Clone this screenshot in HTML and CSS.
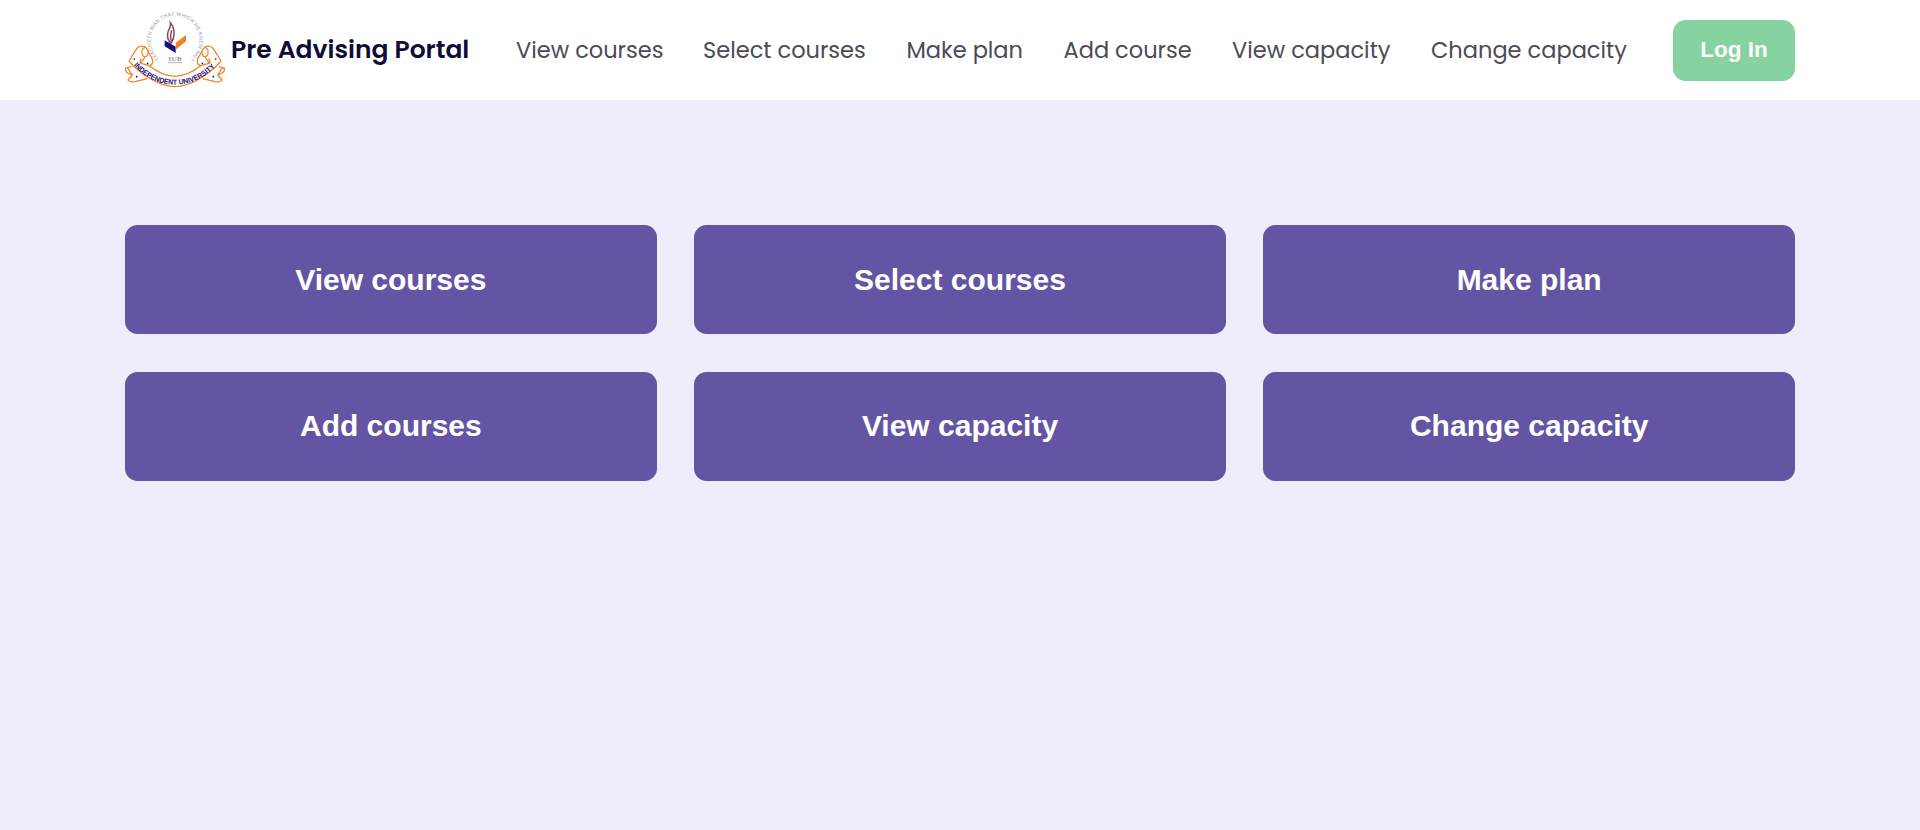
FILE: index.html
```html
<!DOCTYPE html>
<html lang="en">
<head>
<meta charset="utf-8">
<title>Pre Advising Portal</title>
<link rel="stylesheet" href="styles.css">
</head>
<body>
<header class="navbar">
  <a class="brand">
    <svg class="logo" viewBox="15 30 300 234" aria-label="Independent University">
      <defs>
        <path id="motto" d="M118 176A73 73 0 1 1 212 176"/>
        <path id="banner" d="M38 192Q92 254 165 254T292 192"/>
        <g id="scroll" fill="none" stroke="#ee8425" stroke-width="3.6" stroke-linejoin="round">
          <path d="M27 183L50 146Q58 136 70 139Q79 141 83 151L98 180Q100 194 88 197L78 194M27 183Q54 215 94 238Q130 260 165 260M88 197Q124 226 165 229"/>
          <path d="M83 151Q87 166 75 171Q64 168 66 151Q68 144 75 143M75 171L62 190Q58 184 64 176M62 190L78 194"/>
          <path d="M34 200L16 204Q14 213 25 220L37 225L24 240Q28 247 45 245L82 236M18 204Q25 203 29 214L37 225"/>
        </g>
      </defs>
      <text class="logo-motto"><textPath href="#motto" textLength="358" lengthAdjust="spacing">TEACHETH MAN THAT WHICH HE KNEW NOT</textPath></text>
      <path d="M153 132Q137 113 145 93Q153 78 151 68Q163 82 162 102Q162 116 155 127Q149 111 155 91" fill="none" stroke="#824b68" stroke-width="4.5"/>
      <path d="M134 121L167 140V159L134 139Z" fill="#1a0c7b"/>
      <path d="M167 128L198 105V124L167 149Z" fill="#ee8425"/>
      <text class="logo-initials" x="165" y="183" text-anchor="middle" textLength="40" lengthAdjust="spacingAndGlyphs">IUB</text>
      <path d="M143 188H186" stroke="#b5b5b5" stroke-width="3"/>
      <use href="#scroll"/>
      <use href="#scroll" transform="matrix(-1 0 0 1 330 0)"/>
      <g fill="#1a0c7b"><circle cx="43" cy="177" r="2.6"/><circle cx="83" cy="190" r="2.6"/><circle cx="50" cy="230" r="2.6"/><circle cx="287" cy="177" r="2.6"/><circle cx="247" cy="190" r="2.6"/><circle cx="280" cy="230" r="2.6"/></g>
      <text class="logo-banner"><textPath href="#banner" startOffset="5" textLength="276" lengthAdjust="spacingAndGlyphs">INDEPENDENT UNIVERSITY</textPath></text>
    </svg>
    <span class="brand-name">Pre Advising Portal</span>
  </a>
  <nav class="links">
    <a class="link view-courses">View courses</a>
    <a class="link select-courses">Select courses</a>
    <a class="link make-plan">Make plan</a>
    <a class="link add-course">Add course</a>
    <a class="link view-capacity">View capacity</a>
    <a class="link change-capacity">Change capacity</a>
  </nav>
  <button class="login">Log In</button>
</header>
<main class="cards">
  <button class="card">View courses</button>
  <button class="card">Select courses</button>
  <button class="card">Make plan</button>
  <button class="card lower">Add courses</button>
  <button class="card lower">View capacity</button>
  <button class="card lower">Change capacity</button>
</main>
</body>
</html>
```
FILE: styles.css
```css
* { box-sizing: border-box; }
body { margin: 0; min-height: 100vh; background: #efecfb; font-family: Poppins, Inter, sans-serif; }
.navbar { display: flex; align-items: center; height: 100px; padding: 0 125px; background: #fff; }
.brand { display: flex; align-items: center; width: 391px; flex: none; }
.logo { width: 100px; height: 78px; flex: none; margin-top: -2px; }
.logo-motto { font: 15.5px "Liberation Sans", sans-serif; fill: #999; }
.logo-initials { font: bold 17px "Liberation Serif", serif; fill: #999; }
.logo-banner { font: bold 22px "Liberation Sans", sans-serif; fill: #1a0c7b; }
.brand-name { margin-left: 6px; font-size: 25px; font-weight: 600; color: #0f0c35; white-space: nowrap; }
.links { display: flex; flex: 1; }
.link { flex: none; font-size: 22.5px; font-weight: 400; color: #4b4b57; white-space: nowrap; }
.view-courses { width: 187px; }
.select-courses { width: 203.5px; }
.make-plan { width: 157px; }
.add-course { width: 168.5px; }
.view-capacity { width: 199px; }
.login { width: 122px; height: 61px; padding: 0 0 1px; border: 0; border-radius: 12.5px; background: #86d3a1; color: #fff; font: bold 22.5px "Liberation Sans", Arial, sans-serif; }
.cards { display: grid; grid-template-columns: repeat(3, 1fr); grid-auto-rows: 109px; gap: 38px 37.5px; padding: 125px; }
.card { padding: 0; border: 0; border-radius: 12.5px; background: #6355a4; color: #fff; font: bold 30px "Liberation Sans", Arial, sans-serif; }
.lower { padding-bottom: 2px; }
```
